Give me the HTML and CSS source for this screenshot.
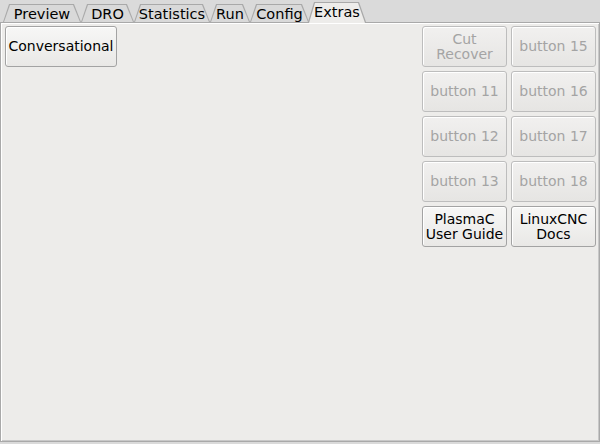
FILE: index.html
```html
<!DOCTYPE html>
<html>
<head>
<meta charset="utf-8">
<link rel="stylesheet" href="styles.css">
</head>
<body>
<div class="app">
  <div class="tabbar">
    <div class="tab t-preview"><span>Preview</span></div>
    <div class="tab t-dro"><span>DRO</span></div>
    <div class="tab t-stats"><span>Statistics</span></div>
    <div class="tab t-run"><span>Run</span></div>
    <div class="tab t-config"><span>Config</span></div>
    <div class="tab t-extras active"><span>Extras</span></div>
  </div>
  <div class="pane">
    <div class="left">
      <button class="btn wide">Conversational</button>
    </div>
    <div class="grid">
      <button class="btn dis">Cut<br>Recover</button>
      <button class="btn dis">button 15</button>
      <button class="btn dis">button 11</button>
      <button class="btn dis">button 16</button>
      <button class="btn dis">button 12</button>
      <button class="btn dis">button 17</button>
      <button class="btn dis">button 13</button>
      <button class="btn dis">button 18</button>
      <button class="btn">PlasmaC<br>User Guide</button>
      <button class="btn">LinuxCNC<br>Docs</button>
    </div>
  </div>
</div>
</body>
</html>
```
FILE: styles.css
```css
html, body {
  margin: 0;
  padding: 0;
}
body {
  width: 600px;
  height: 444px;
  background: #dadada;
  font-family: "DejaVu Sans", sans-serif;
  font-size: 14px;
  color: #000;
  overflow: hidden;
}
.app {
  display: flex;
  flex-direction: column;
  height: 444px;
}
.tabbar {
  display: flex;
  height: 22px;
  padding-left: 3px;
  align-items: flex-end;
}
.tab {
  position: relative;
  height: 18px;
  display: flex;
  justify-content: center;
  align-items: flex-end;
  flex: none;
}
.t-preview { width: 78px; }
.t-dro { width: 53px; }
.t-stats { width: 76px; }
.t-run { width: 40px; }
.t-config { width: 59px; }
.t-extras { width: 58px; margin-left: -1px; }
.tab::before,
.tab::after {
  content: "";
  position: absolute;
  clip-path: polygon(6px 0, calc(100% - 7px) 0, 100% 100%, 0 100%);
}
.tab::before {
  inset: 0;
  background: #a9a9a9;
}
.tab::after {
  inset: 1px 1px 0 1px;
  background: #d9d9d9;
}
.tab span {
  position: relative;
  z-index: 1;
  line-height: 17px;
  margin-bottom: -1px;
  font-size: 14.5px;
}
.tab.active {
  height: 20px;
  z-index: 2;
}
.tab.active span {
  margin-bottom: 1px;
}
.tab.active::after {
  background: #edecea;
  inset: 1px 1px -1px 1px;
}
.pane {
  flex: 1;
  background: #edecea;
  border: 1px solid #a9a9a9;
  box-shadow: inset 1px 1px 0 #ffffff, inset -1px -1px 0 #c8c8c8;
  margin: 0 0 2px 0;
  display: flex;
  justify-content: space-between;
  align-items: flex-start;
  padding: 3px 3px 0 4px;
}
.btn {
  font-family: "DejaVu Sans", sans-serif;
  font-size: 14px;
  line-height: 15px;
  color: #000;
  background: linear-gradient(#f7f7f6, #e9e8e6);
  border: 1px solid #a3a3a3;
  border-radius: 3px;
  box-shadow: inset 1px 1px 0 #ffffff;
  height: 41px;
  padding: 0;
  margin: 0;
  text-align: center;
}
.btn.wide {
  width: 112px;
}
.btn.dis {
  color: #a4a4a4;
  background: linear-gradient(#f1f0ef, #e6e5e3);
  border-color: #bdbdbd;
}
.grid {
  display: grid;
  grid-template-columns: 85px 85px;
  grid-auto-rows: 41px;
  gap: 4px;
}
.grid .btn {
  width: 85px;
}
```
